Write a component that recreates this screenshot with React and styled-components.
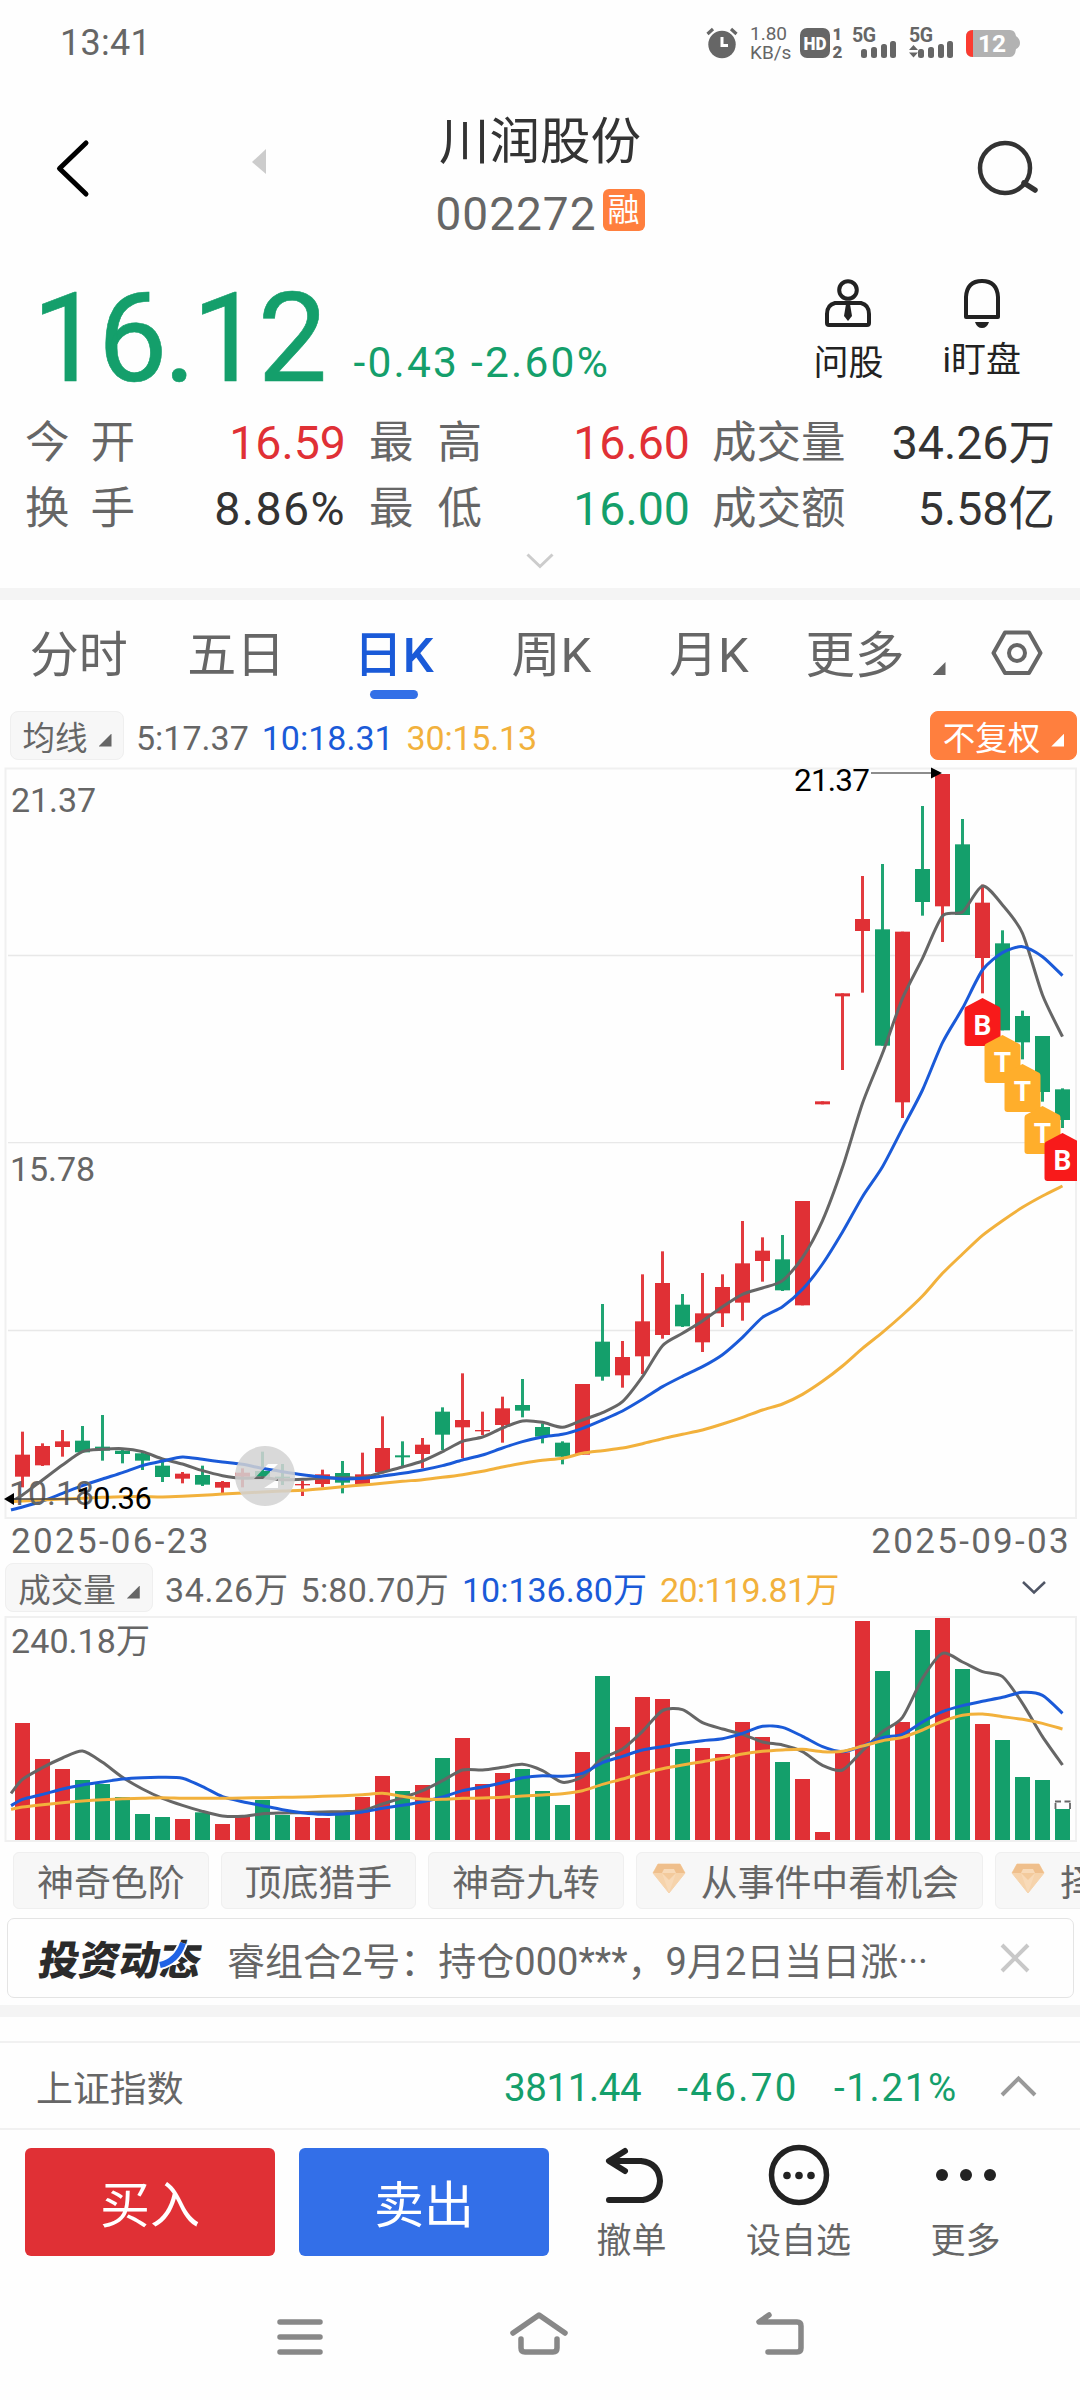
import styled, { createGlobalStyle } from "styled-components";

const RED = "#e03035";
const GREEN = "#149f6b";
const BLUE = "#1a5ad8";
const GRAY = "#666";
const YELLOW = "#f2b13c";

const GlobalStyle = createGlobalStyle`
  * { box-sizing: border-box; }
  body {
    margin: 0;
    background: #fefefe;
    font-family: Roboto, "Noto Sans CJK SC", sans-serif;
    color: #333;
  }
  svg { display: block; flex: none; overflow: visible; }
`;

// candle: [color, high, top, bottom, low], 3 units = 1px
const candles = [
  ["r", 2015, 2084, 2150, 2182], ["r", 2050, 2058, 2116, 2118], ["r", 2010, 2044, 2061, 2090],
  ["g", 1998, 2042, 2077, 2077], ["g", 1965, 2060, 2072, 2102], ["g", 2065, 2072, 2082, 2110],
  ["g", 2075, 2080, 2102, 2130], ["g", 2100, 2117, 2151, 2166], ["r", 2136, 2141, 2156, 2170],
  ["g", 2117, 2145, 2174, 2178], ["r", 2163, 2166, 2183, 2204], ["r", 2125, 2138, 2150, 2182],
  ["g", 2075, 2133, 2150, 2155], ["g", 2112, 2150, 2154, 2175], ["r", 2162, 2172, 2176, 2208],
  ["r", 2129, 2143, 2172, 2182], ["g", 2103, 2139, 2168, 2200], ["r", 2078, 2143, 2172, 2176],
  ["r", 1969, 2064, 2136, 2140], ["g", 2044, 2086, 2092, 2122], ["r", 2034, 2054, 2082, 2125],
  ["g", 1942, 1955, 2024, 2070], ["r", 1840, 1980, 2002, 2095], ["r", 1955, 2010, 2014, 2025],
  ["r", 1910, 1945, 1995, 2048], ["g", 1857, 1935, 1952, 1972], ["g", 1990, 2001, 2030, 2050],
  ["g", 2044, 2048, 2090, 2113], ["r", 1872, 1872, 2084, 2084], ["g", 1632, 1745, 1850, 1862],
  ["r", 1743, 1791, 1846, 1883], ["r", 1543, 1684, 1789, 1842], ["r", 1474, 1569, 1725, 1736],
  ["g", 1602, 1634, 1699, 1701], ["r", 1539, 1660, 1747, 1776], ["r", 1543, 1581, 1660, 1701],
  ["r", 1383, 1510, 1628, 1682], ["r", 1432, 1472, 1503, 1565], ["g", 1425, 1498, 1591, 1593],
  ["r", 1323, 1323, 1636, 1636], ["r", 1024, 1024, 1033, 1033], ["r", 700, 700, 709, 930],
  ["r", 348, 477, 513, 698], ["g", 312, 508, 857, 857], ["r", 515, 515, 1027, 1074],
  ["g", 138, 327, 426, 467], ["r", 42, 42, 439, 546], ["g", 177, 253, 465, 465],
  ["r", 374, 428, 594, 700], ["g", 511, 550, 811, 811], ["g", 752, 768, 847, 898],
  ["g", 828, 828, 996, 1025], ["g", 985, 988, 1080, 1104],
];

const ma5 = [2225, 2205, 2160, 2115, 2075, 2068, 2066, 2075, 2097, 2112, 2132, 2147, 2155, 2153, 2159, 2158, 2154, 2153, 2153, 2137, 2121, 2103, 2075, 2044, 2031, 2004, 1983, 1987, 2002, 1980, 1958, 1925, 1850, 1757, 1720, 1683, 1640, 1603, 1584, 1562, 1493, 1382, 1222, 1030, 880, 715, 595, 468, 456, 378, 435, 520, 705, 830];
const ma10 = [2250, 2241, 2223, 2200, 2177, 2157, 2138, 2117, 2103, 2091, 2098, 2106, 2113, 2125, 2135, 2144, 2151, 2157, 2155, 2148, 2140, 2130, 2117, 2100, 2085, 2064, 2045, 2031, 2023, 2005, 1980, 1953, 1918, 1880, 1849, 1820, 1784, 1732, 1672, 1640, 1588, 1512, 1416, 1310, 1220, 1105, 990, 848, 745, 630, 578, 560, 590, 647];
const ma30 = [2225, 2223, 2220, 2217, 2215, 2212, 2210, 2210, 2211, 2209, 2206, 2202, 2199, 2196, 2193, 2191, 2186, 2180, 2175, 2170, 2164, 2159, 2152, 2144, 2134, 2121, 2110, 2101, 2095, 2080, 2072, 2064, 2051, 2036, 2023, 2010, 1992, 1972, 1950, 1932, 1903, 1864, 1818, 1765, 1717, 1665, 1608, 1540, 1482, 1426, 1382, 1342, 1308, 1278];

const volumes = [669, 777, 807, 840, 852, 891, 942, 951, 957, 937, 972, 948, 900, 945, 951, 954, 945, 891, 828, 873, 855, 774, 714, 852, 819, 807, 873, 915, 756, 528, 681, 591, 597, 747, 744, 762, 666, 711, 786, 837, 996, 757, 363, 513, 666, 390, 354, 507, 672, 720, 831, 840, 927];
const vol5 = [880, 838, 803, 774, 753, 787, 832, 867, 895, 916, 934, 948, 949, 941, 939, 938, 936, 935, 932, 912, 893, 872, 842, 810, 810, 802, 793, 812, 847, 830, 775, 747, 694, 632, 629, 668, 687, 703, 726, 735, 755, 796, 810, 752, 695, 652, 535, 460, 486, 515, 530, 610, 710, 795];
const vol10 = [917, 898, 883, 867, 855, 846, 837, 833, 832, 835, 860, 890, 905, 917, 929, 938, 943, 942, 936, 925, 916, 905, 891, 872, 861, 848, 833, 827, 829, 820, 788, 769, 750, 740, 730, 722, 716, 700, 679, 682, 709, 740, 755, 738, 713, 703, 666, 635, 617, 604, 592, 577, 586, 640];
const vol20 = [928, 921, 914, 908, 903, 899, 896, 895, 893, 895, 895, 895, 894, 893, 892, 891, 889, 887, 884, 880, 889, 897, 898, 895, 894, 892, 888, 885, 881, 872, 853, 837, 820, 806, 795, 785, 775, 762, 754, 750, 748, 755, 754, 738, 722, 712, 690, 664, 646, 642, 650, 658, 670, 687];

const dayX = (i) => 22.5 + i * 20;

// smooth line through the days, first value is the left edge
function linePath(values, top) {
  const p = values.map((v, i) => [i === 0 ? 11 : dayX(i - 1), v / 3 - top]);
  let d = `M${p[0][0]} ${p[0][1]}`;
  for (let i = 1; i < p.length; i++) {
    const a = p[i - 2] || p[i - 1];
    const b = p[i - 1];
    const c = p[i];
    const e = p[i + 1] || c;
    const k = 8;
    d += `C${b[0] + (c[0] - a[0]) / k} ${b[1] + (c[1] - a[1]) / k} ${c[0] - (e[0] - b[0]) / k} ${c[1] - (e[1] - b[1]) / k} ${c[0]} ${c[1]}`;
  }
  return d;
}

const Screen = styled.div`
  width: 1080px;
  height: 2400px;
  overflow: hidden;
  display: flex;
  flex-direction: column;
  background: #fefefe;
`;

const StatusBar = styled.div`
  height: 85px;
  padding: 0 60px;
  display: flex;
  align-items: center;
  justify-content: space-between;
  color: ${GRAY};
`;

const Clock = styled.div`
  font-size: 36px;
  letter-spacing: 0.3px;
`;

const StatusIcons = styled.div`
  display: flex;
  align-items: center;
`;

const Speed = styled.div`
  width: 37px;
  margin: 0 13px 0 12px;
  font-size: 19px;
  line-height: 19px;
  text-align: center;
  white-space: nowrap;
`;

const SignalIcon = styled.svg`
  margin-right: 11px;
`;

const Header = styled.header`
  height: 170px;
  display: flex;
  justify-content: space-between;
  align-items: flex-start;
`;

const HeaderSide = styled.div`
  width: 300px;
  padding-top: 48px;
  display: flex;
  justify-content: ${(props) => props.$end ? "flex-end" : "flex-start"};
`;

const StockTitle = styled.div`
  padding-top: 20px;
  display: flex;
  flex-direction: column;
  align-items: center;
`;

const StockName = styled.div`
  font-size: 50.5px;
  line-height: 74px;
`;

const StockCode = styled.div`
  display: flex;
  align-items: center;
  gap: 6px;
  padding-top: 3px;
  font-size: 46px;
  line-height: 64px;
  letter-spacing: 1px;
  color: ${GRAY};
`;

const MarginBadge = styled.span`
  width: 42px;
  height: 42px;
  margin-top: -8px;
  border-radius: 6px;
  background: #ff7f3e;
  color: #fff;
  font-size: 32px;
  line-height: 42px;
  text-align: center;
  letter-spacing: 0;
`;

const Quote = styled.div`
  height: 150px;
  padding: 0 59px 0 32px;
  display: flex;
  color: ${GREEN};
`;

const LastPrice = styled.div`
  font-size: 124px;
  line-height: 167px;
  letter-spacing: -4px;
  -webkit-text-stroke: 0.6px ${GREEN};
`;

const Change = styled.div`
  margin-left: 30px;
  padding-top: 78px;
  display: flex;
  gap: 12px;
  font-size: 42.5px;
  line-height: 60px;
  letter-spacing: 2.2px;
`;

const QuoteActions = styled.div`
  margin-left: auto;
  display: flex;
  gap: 59px;
`;

const QuoteAction = styled.div`
  padding-top: 23px;
  display: flex;
  flex-direction: column;
  align-items: center;
  color: #222;
  font-size: 35px;
  line-height: 40px;
  gap: ${(props) => props.$gap}px;
`;

const Stats = styled.div`
  height: 183px;
  padding: 5px 25px 0;
  display: grid;
  grid-template-columns: 321px 23px 321px 22px 343px;
  grid-template-rows: 66px 66px 38px;
  align-items: center;
`;

const Stat = styled.div`
  display: flex;
  justify-content: space-between;
  align-items: center;
  grid-column: ${(props) => props.$col};
  font-size: 44.5px;
  line-height: 64px;
  color: ${GRAY};
`;

const StatLabel = styled.span`
  letter-spacing: ${(props) => props.$wide || 0}px;
`;

const StatValue = styled.span`
  color: ${(props) => props.$color || "#333"};
  font-size: 46.5px;
  line-height: 64px;
  letter-spacing: ${(props) => props.$spacing || 0}px;
`;

const MoreStats = styled.div`
  grid-column: 1 / -1;
  justify-self: center;
`;

const Band = styled.div`
  height: 12px;
  background: #f4f4f4;
`;

const Tabs = styled.div`
  height: 105px;
  display: flex;
  align-items: flex-start;
`;

const Tab = styled.div`
  width: 157.5px;
  padding-top: 23px;
  display: flex;
  flex-direction: column;
  align-items: center;
  font-size: 49px;
  line-height: 66px;
  font-weight: ${(props) => props.$active ? 500 : 400};
  color: ${(props) => props.$active ? BLUE : GRAY};

  &::after {
    content: "";
    width: 48px;
    height: 9px;
    margin-top: 1px;
    border-radius: 5px;
    background: ${(props) => props.$active ? "#3370e7" : "none"};
  }
`;

const MoreTab = styled.div`
  padding: 23px 0 0 18px;
  display: flex;
  align-items: flex-end;
  font-size: 49.5px;
  line-height: 66px;
  color: ${GRAY};
  gap: 28px;
`;

const Corner = styled.span`
  width: 13px;
  height: 13px;
  margin-top: ${(props) => props.$top || 0}px;
  margin-bottom: ${(props) => props.$bottom || 0}px;
  background: ${(props) => props.$color || GRAY};
  clip-path: polygon(100% 0, 100% 100%, 0 100%);
`;

const TabSettings = styled.div`
  margin: 29px 0 0 45px;
`;

const IndicatorRow = styled.div`
  height: ${(props) => props.$height}px;
  padding: ${(props) => props.$padding};
  display: flex;
  align-items: center;
`;

const IndicatorButton = styled.div`
  width: ${(props) => props.$width}px;
  height: 49px;
  border-radius: 8px;
  border: 1px solid ${(props) => props.$solid ? "#ff7f3e" : "#efefef"};
  background: ${(props) => props.$solid ? "#ff7f3e" : "#f7f7f7"};
  color: ${(props) => props.$solid ? "#fff" : GRAY};
  margin-left: ${(props) => props.$solid ? "auto" : 0};
  display: flex;
  align-items: center;
  justify-content: center;
  gap: 11px;
  font-size: 32.5px;
`;

const Legend = styled.span`
  margin-left: ${(props) => props.$left}px;
  padding-top: ${(props) => props.$top || 0}px;
  font-size: 34px;
  white-space: nowrap;
  letter-spacing: ${(props) => props.$spacing || 0}px;
  color: ${(props) => props.$color || GRAY};
`;

const CollapseIcon = styled.svg`
  margin-left: auto;
`;

const Dates = styled.div`
  height: 41px;
  padding: 2px 9px 0 11px;
  display: flex;
  align-items: center;
  justify-content: space-between;
  font-size: 35px;
  letter-spacing: 2.3px;
  color: ${GRAY};
`;

const ChipRow = styled.div`
  height: 75px;
  padding: 9px 0 0 13px;
  display: flex;
  gap: 12px;
  overflow: hidden;
`;

const Chip = styled.div`
  height: 57px;
  flex: none;
  padding: 0 23px 2px ${(props) => props.$gem ? 15 : 23}px;
  border: 1px solid #efefef;
  border-radius: 6px;
  background: #f7f7f7;
  display: flex;
  align-items: center;
  gap: 15px;
  font-size: 36.9px;
  white-space: nowrap;
  color: ${GRAY};
`;

const Notice = styled.div`
  height: 80px;
  margin: 0 6px 7px 7px;
  padding: 0 43px 0 31px;
  border: 1px solid #e4e4e4;
  border-radius: 7px;
  display: flex;
  align-items: center;
  color: ${GRAY};
`;

const NoticeLogo = styled.div`
  position: relative;
  width: 162px;
  margin-top: 5px;
  line-height: 48px;
`;

const NoticeLogoText = styled.div`
  font-size: 40.5px;
  font-weight: 900;
  color: #2b2b2b;
  transform: skewX(-9deg);
  white-space: nowrap;
`;

const LogoStroke = styled.svg`
  position: absolute;
  left: 118px;
  top: 5px;
`;

const NoticeText = styled.div`
  margin-left: 26px;
  flex: 1;
  font-size: 38px;
  white-space: nowrap;
`;

const IndexRow = styled.div`
  height: 89px;
  margin-top: 24px;
  padding: 4px 43px 0 36px;
  border-top: 2px solid #f1f1f1;
  border-bottom: 2px solid #f1f1f1;
  display: flex;
  align-items: center;
  font-size: 38.5px;
  color: ${GREEN};
`;

const IndexName = styled.div`
  flex: 1;
  margin-top: -3px;
  font-size: 36.9px;
  color: ${GRAY};
`;

const IndexValue = styled.div`
  margin-right: ${(props) => props.$right}px;
  letter-spacing: ${(props) => props.$spacing || 0}px;
`;

const ActionBar = styled.div`
  height: 150px;
  padding: 18px 0 0 25px;
  display: flex;
`;

const TradeButton = styled.div`
  width: 250px;
  height: 108px;
  margin-right: 24px;
  border-radius: 6px;
  background: ${(props) => props.$bg};
  color: #fff;
  font-size: 50px;
  line-height: 116px;
  text-align: center;
`;

const Action = styled.div`
  width: ${(props) => props.$width}px;
  display: flex;
  flex-direction: column;
  align-items: center;
  gap: 11px;
  margin-top: -4px;
  font-size: 35px;
  line-height: 46px;
  color: ${GRAY};
`;

const NavBar = styled.div`
  height: 120px;
  padding: 30px 275px 0 277px;
  display: flex;
  justify-content: space-between;
`;

function Signal(props) {
  return (
    <SignalIcon width="46" height="32" viewBox="0 0 46 32">
      <text x="0" y="15" fontSize="19.5" fontWeight="700" fill={GRAY} textLength="24">5G</text>
      {props.arrows && <path d="M0 23h9l-4.5-5zM0 25.5h9l-4.5 5z" fill={GRAY} />}
      <g fill={GRAY}>
        <rect x="9" y="22" width="6" height="9" rx="2.5" />
        <rect x="19" y="20" width="6" height="11" rx="2.5" />
        <rect x="29" y="17" width="6" height="14" rx="2.5" />
        <rect x="38" y="14" width="6" height="17" rx="2.5" />
      </g>
    </SignalIcon>
  );
}

function TradeMark({ type, x, y }) {
  return (
    <g>
      <path
        d={`M${x} ${y}L${x + 17} ${y + 9}Q${x + 18} ${y + 10} ${x + 18} ${y + 12}V${y + 45}Q${x + 18} ${y + 48} ${x + 15} ${y + 48}H${x - 15}Q${x - 18} ${y + 48} ${x - 18} ${y + 45}V${y + 12}Q${x - 18} ${y + 10} ${x - 17} ${y + 9}Z`}
        fill={type === "B" ? "#f81a1a" : "#ffae2b"}
      />
      <text x={x} y={y + 37} fontSize="28" fontWeight="700" fill="#fff" textAnchor="middle">{type}</text>
    </g>
  );
}

function PriceChart() {
  return (
    <svg width="1080" height="760" viewBox="0 0 1080 760">
      <rect x="5.5" y="8.5" width="1070.5" height="749.5" fill="none" stroke="#f0f0f0" strokeWidth="2" />
      <path d="M8 195.5H1073M8 382.7H1073M8 570.5H1073" stroke="#e8e8e8" strokeWidth="1.3" />
      {candles.map((c, i) => (
        <g key={i} fill={c[0] === "r" ? RED : GREEN}>
          <rect x={dayX(i) - 1.5} y={c[1] / 3} width="3" height={(c[4] - c[1]) / 3} opacity="0.95" />
          <rect x={dayX(i) - 7.5} y={c[2] / 3} width="15" height={(c[3] - c[2]) / 3} />
        </g>
      ))}
      <g fill="none" strokeWidth="3" strokeLinejoin="round">
        <path d={linePath(ma5, 0)} stroke={GRAY} />
        <path d={linePath(ma10, 0)} stroke={BLUE} />
        <path d={linePath(ma30, 0)} stroke={YELLOW} />
      </g>
      <g fontSize="34" fill={GRAY}>
        <text x="11" y="52" textLength="85">21.37</text>
        <text x="10" y="421" textLength="85">15.78</text>
        <text x="9" y="745" textLength="85">10.18</text>
      </g>
      <path d="M871 13H934" stroke="#666" strokeWidth="1.6" />
      <path d="M931 7.5L942 13L931 18.5Z" fill="#000" />
      <text x="794" y="31" fontSize="31.5" textLength="76">21.37</text>
      <path d="M12 739H78" stroke="#444" strokeWidth="1.6" />
      <path d="M14 733L4 739L14 745Z" fill="#000" />
      <text x="76" y="748.5" fontSize="31" textLength="76">10.36</text>
      <path
        fillRule="evenodd"
        fill="#d2d2d2"
        fillOpacity="0.85"
        d="M265 686a30 30 0 1 0 .1 0zM268 704h10l-15 15h-9zM278 719v9h-14z"
      />
      <TradeMark type="B" x={982.5} y={238} />
      <TradeMark type="T" x={1002.5} y={275} />
      <TradeMark type="T" x={1022.5} y={304} />
      <TradeMark type="T" x={1042.5} y={346} />
      <TradeMark type="B" x={1062.5} y={373} />
      <rect x="1077" y="370" width="4" height="60" fill="#fefefe" />
    </svg>
  );
}

function VolumeChart() {
  const top = 113;
  return (
    <svg width="1080" height="230" viewBox="0 0 1080 230">
      <rect x="5.5" y="4" width="1070.5" height="224" fill="none" stroke="#f0f0f0" strokeWidth="2" />
      <text x="11" y="40" fontSize="34" fill={GRAY} textLength="139">240.18万</text>
      {volumes.map((v, i) => (
        <rect key={i} x={dayX(i) - 7.5} y={v / 3 - top} width="15" height={(1020 - v) / 3} fill={candles[i][0] === "r" ? RED : GREEN} />
      ))}
      <path d="M1055.5 196V190M1055 188.5H1061M1064.5 188.5H1070.5M1070 190V196" fill="none" stroke={GRAY} strokeWidth="1.8" />
      <g fill="none" strokeWidth="3" strokeLinejoin="round">
        <path d={linePath(vol5, top)} stroke={GRAY} />
        <path d={linePath(vol10, top)} stroke={BLUE} />
        <path d={linePath(vol20, top)} stroke={YELLOW} />
      </g>
    </svg>
  );
}

function Gem() {
  return (
    <svg width="34" height="31" viewBox="0 1 34 31">
      <path d="M6 1H28L33 10L17 30L1 10Z" fill="#f6d3ab" stroke="#f6d3ab" strokeLinejoin="round" />
      <path d="M6 1L1 10H33L28 1Z" fill="#efbf8c" />
      <path d="M10 10L12 6H22L24 10L17 30Z" fill="#f8dab8" />
      <path d="M10 10H24L17 17Z" fill="#f3ca9c" />
    </svg>
  );
}

function App() {
  return (
    <Screen>
      <GlobalStyle />
      <StatusBar>
        <Clock>13:41</Clock>
        <StatusIcons>
          <svg width="32" height="32" viewBox="0 0 32 32">
            <circle cx="16" cy="17.5" r="13.7" fill={GRAY} />
            <path d="M1.5 7L7 2M30.5 7L25 2" stroke={GRAY} strokeWidth="3.2" />
            <path d="M16 10V18.5H22" fill="none" stroke="#fff" strokeWidth="3" />
          </svg>
          <Speed>1.80<br />KB/s</Speed>
          <svg width="52" height="32" viewBox="0 0 52 32">
            <rect x="0" y="1" width="30" height="30" rx="7" fill={GRAY} />
            <text x="3.5" y="22.5" fontSize="18.5" fontWeight="900" fill="#fff" textLength="23" lengthAdjust="spacingAndGlyphs">HD</text>
            <text x="32.5" y="13" fontSize="16.5" fontWeight="900" fill={GRAY}>1</text>
            <text x="32.5" y="31" fontSize="17" fontWeight="900" fill={GRAY}>2</text>
          </svg>
          <Signal />
          <Signal arrows />
          <svg width="54" height="32" viewBox="0 0 54 32">
            <path d="M7 3H44Q49 3 50 9Q54 12 54 16Q54 20 50 22Q49 30 44 30H7Q0 30 0 23V10Q0 3 7 3Z" fill="#b2b2b2" />
            <path d="M7 3V30Q0 30 0 23V10Q0 3 7 3Z" fill="#fb3b30" />
            <text x="12" y="25" fontSize="24.5" fontWeight="700" fill="#fff">12</text>
          </svg>
        </StatusIcons>
      </StatusBar>

      <Header>
        <HeaderSide>
          <svg width="280" height="70" viewBox="0 133 280 70">
            <path d="M86 143L59.5 168.5L86 194" fill="none" stroke="#000" strokeWidth="5" strokeLinecap="round" strokeLinejoin="round" />
            <path d="M266 149V174L252 162Z" fill="#ccc" />
          </svg>
        </HeaderSide>
        <StockTitle>
          <StockName>川润股份</StockName>
          <StockCode>002272<MarginBadge>融</MarginBadge></StockCode>
        </StockTitle>
        <HeaderSide $end>
          <svg width="110" height="70" viewBox="970 133 110 70">
            <circle cx="1005" cy="168" r="25" fill="none" stroke="#333" strokeWidth="4.5" />
            <path d="M1024 183L1035 190" stroke="#333" strokeWidth="5.5" strokeLinecap="round" />
          </svg>
        </HeaderSide>
      </Header>

      <Quote>
        <LastPrice>16.12</LastPrice>
        <Change>
          <span>-0.43</span>
          <span>-2.60%</span>
        </Change>
        <QuoteActions>
          <QuoteAction $gap={16}>
            <svg width="48" height="50" viewBox="0 0 48 50" fill="none" stroke="#222" strokeWidth="4">
              <circle cx="24" cy="12" r="8.8" />
              <path d="M11 25H37Q45 27 45 36V45Q45 47 43 47H5Q3 47 3 45V36Q3 27 11 25Z" />
              <path d="M22 26H26L28 38L24 43L20 38Z" fill="#222" stroke="none" />
            </svg>
            问股
          </QuoteAction>
          <QuoteAction $gap={13}>
            <svg width="40" height="50" viewBox="0 0 40 50" fill="none" stroke="#222" strokeWidth="4">
              <path d="M4 39V19Q5 3 20 3Q35 3 36 19V39Z" strokeLinejoin="round" />
              <path d="M13 44H27Q25 50 20 50Q15 50 13 44Z" fill="#222" stroke="none" />
            </svg>
            <span>i盯盘</span>
          </QuoteAction>
        </QuoteActions>
      </Quote>

      <Stats>
        <Stat $col={1}><StatLabel $wide={21}>今开</StatLabel><StatValue $color={RED}>16.59</StatValue></Stat>
        <Stat $col={3}><StatLabel $wide={24}>最高</StatLabel><StatValue $color={RED}>16.60</StatValue></Stat>
        <Stat $col={5}><StatLabel>成交量</StatLabel><StatValue>34.26万</StatValue></Stat>
        <Stat $col={1}><StatLabel $wide={21}>换手</StatLabel><StatValue $spacing={1.4}>8.86%</StatValue></Stat>
        <Stat $col={3}><StatLabel $wide={24}>最低</StatLabel><StatValue $color={GREEN}>16.00</StatValue></Stat>
        <Stat $col={5}><StatLabel>成交额</StatLabel><StatValue>5.58亿</StatValue></Stat>
        <MoreStats>
          <svg width="28" height="16" viewBox="0 0 28 16">
            <path d="M1.5 1.5L14 13.5L26.5 1.5" fill="none" stroke="#ccc" strokeWidth="3" />
          </svg>
        </MoreStats>
      </Stats>
      <Band />

      <Tabs>
        <Tab>分时</Tab>
        <Tab>五日</Tab>
        <Tab $active>日K</Tab>
        <Tab>周K</Tab>
        <Tab>月K</Tab>
        <MoreTab>更多<Corner $bottom={14} /></MoreTab>
        <TabSettings>
          <svg width="52" height="48" viewBox="0 0 52 48" fill="none" stroke={GRAY} strokeWidth="4">
            <path d="M14 3.5H38L49.5 24L38 44H14L2.5 24Z" strokeLinejoin="round" />
            <circle cx="26" cy="24" r="8" />
          </svg>
        </TabSettings>
      </Tabs>

      <IndicatorRow $height={55} $padding="5px 3px 0 10px">
        <IndicatorButton $width={114}>均线<Corner $top={10} /></IndicatorButton>
        <Legend $left={12} $top={5}>5:17.37</Legend>
        <Legend $left={13} $top={5} $color={BLUE}>10:18.31</Legend>
        <Legend $left={13} $top={5} $color={YELLOW} $spacing={-0.2}>30:15.13</Legend>
        <IndicatorButton $width={147} $solid>不复权<Corner $top={10} $color="#fff" /></IndicatorButton>
      </IndicatorRow>
      <PriceChart />
      <Dates>
        <span>2025-06-23</span>
        <span>2025-09-03</span>
      </Dates>
      <IndicatorRow $height={52} $padding="0 33px 0 5px">
        <IndicatorButton $width={148}>成交量<Corner $top={10} /></IndicatorButton>
        <Legend $left={12} $spacing={0.7}>34.26万</Legend>
        <Legend $left={12} $spacing={0.2}>5:80.70万</Legend>
        <Legend $left={13} $color={BLUE}>10:136.80万</Legend>
        <Legend $left={13} $color={YELLOW} $spacing={-0.6}>20:119.81万</Legend>
        <CollapseIcon width="26" height="16" viewBox="0 0 26 16">
          <path d="M2 3L13 13.5L24 3" fill="none" stroke="#4f5565" strokeWidth="2.5" />
        </CollapseIcon>
      </IndicatorRow>
      <VolumeChart />

      <ChipRow>
        <Chip>神奇色阶</Chip>
        <Chip>顶底猎手</Chip>
        <Chip>神奇九转</Chip>
        <Chip $gem><Gem />从事件中看机会</Chip>
        <Chip $gem><Gem />择时</Chip>
      </ChipRow>
      <Notice>
        <NoticeLogo>
          <NoticeLogoText>投资动态</NoticeLogoText>
          <LogoStroke width="34" height="28" viewBox="0 0 34 28" fill="none">
            <path d="M26 1Q20 19 3 23" stroke="#fefefe" strokeWidth="10" />
            <path d="M26 1Q20 19 3 23" stroke="#1f63e6" strokeWidth="6" />
          </LogoStroke>
        </NoticeLogo>
        <NoticeText>睿组合2号：持仓000***，9月2日当日涨···</NoticeText>
        <svg width="30" height="30" viewBox="0 0 30 30">
          <path d="M2 2L28 28M28 2L2 28" stroke="#c8c8c8" strokeWidth="4" />
        </svg>
      </Notice>
      <Band />

      <IndexRow>
        <IndexName>上证指数</IndexName>
        <IndexValue $right={36} $spacing={-0.4}>3811.44</IndexValue>
        <IndexValue $right={35} $spacing={2.4}>-46.70</IndexValue>
        <IndexValue $right={42} $spacing={1.7}>-1.21%</IndexValue>
        <svg width="37" height="22" viewBox="0 0 37 22">
          <path d="M2 18L18.5 1.5L35 18" fill="none" stroke="#999" strokeWidth="4" />
        </svg>
      </IndexRow>

      <ActionBar>
        <TradeButton $bg={RED}>买入</TradeButton>
        <TradeButton $bg="#336fe8">卖出</TradeButton>
        <Action $width={117}>
          <svg width="62" height="64" viewBox="0 0 62 64" fill="none" stroke="#222" strokeWidth="6" strokeLinecap="round" strokeLinejoin="round">
            <path d="M24 7L8 17L24 27M9 17H40Q58 19 59 37Q58 53 42 56H8" />
          </svg>
          撤单
        </Action>
        <Action $width={217}>
          <svg width="62" height="64" viewBox="0 0 62 64" fill="#222">
            <circle cx="31" cy="31" r="27.5" fill="none" stroke="#222" strokeWidth="5.5" />
            <circle cx="19" cy="31.5" r="3.8" />
            <circle cx="31" cy="31.5" r="3.8" />
            <circle cx="43" cy="31.5" r="3.8" />
          </svg>
          设自选
        </Action>
        <Action $width={117}>
          <svg width="62" height="64" viewBox="0 0 62 64" fill="#222">
            <circle cx="7" cy="31" r="6" />
            <circle cx="31" cy="31" r="6" />
            <circle cx="55" cy="31" r="6" />
          </svg>
          更多
        </Action>
      </ActionBar>

      <NavBar>
        <svg width="46" height="48" viewBox="0 0 46 48" stroke="#888" strokeWidth="5.5" strokeLinecap="round">
          <path d="M3 12H43M3 27H43M3 42H43" />
        </svg>
        <svg width="60" height="48" viewBox="0 0 60 48" fill="none" stroke="#888" strokeWidth="5.5" strokeLinecap="round" strokeLinejoin="round">
          <path d="M4 23L30 5L56 23" />
          <path d="M12 29V38Q12 42 16 42H44Q48 42 48 38V29" />
        </svg>
        <svg width="50" height="48" viewBox="0 0 50 48" fill="none" stroke="#888" strokeWidth="5.5" strokeLinecap="round" strokeLinejoin="round">
          <path d="M14 5L4 12H42Q46 12 46 16V38Q46 42 42 42H13" />
        </svg>
      </NavBar>
    </Screen>
  );
}

export default App;
